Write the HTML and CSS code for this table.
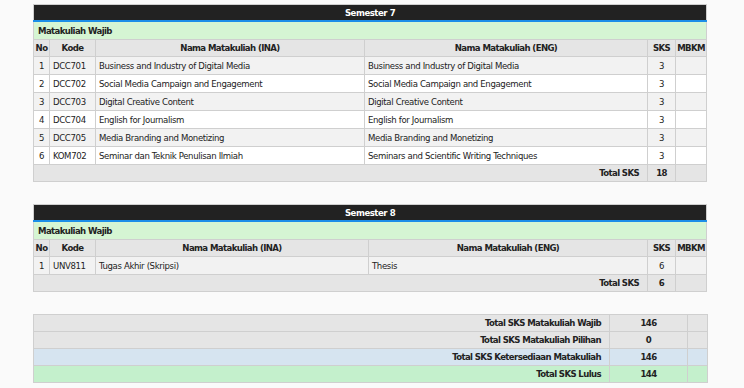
FILE: index.html
```html
<!DOCTYPE html>
<html lang="id">
<head>
<meta charset="utf-8">
<title>Kurikulum</title>
<link rel="stylesheet" href="styles.css">
</head>
<body>
<main class="page">
  <table class="sem sem7">
    <colgroup>
      <col class="c-no"><col class="c-kode"><col class="c-ina"><col class="c-eng"><col class="c-sks"><col class="c-mbkm">
    </colgroup>
    <tr class="sem-title"><th colspan="6">Semester 7</th></tr>
    <tr class="group"><td colspan="6">Matakuliah Wajib</td></tr>
    <tr class="head"><th>No</th><th>Kode</th><th>Nama Matakuliah (INA)</th><th>Nama Matakuliah (ENG)</th><th>SKS</th><th>MBKM</th></tr>
    <tr class="odd"><td class="num">1</td><td>DCC701</td><td>Business and Industry of Digital Media</td><td>Business and Industry of Digital Media</td><td class="num">3</td><td></td></tr>
    <tr class="even"><td class="num">2</td><td>DCC702</td><td>Social Media Campaign and Engagement</td><td>Social Media Campaign and Engagement</td><td class="num">3</td><td></td></tr>
    <tr class="odd"><td class="num">3</td><td>DCC703</td><td>Digital Creative Content</td><td>Digital Creative Content</td><td class="num">3</td><td></td></tr>
    <tr class="even"><td class="num">4</td><td>DCC704</td><td>English for Journalism</td><td>English for Journalism</td><td class="num">3</td><td></td></tr>
    <tr class="odd"><td class="num">5</td><td>DCC705</td><td>Media Branding and Monetizing</td><td>Media Branding and Monetizing</td><td class="num">3</td><td></td></tr>
    <tr class="even"><td class="num">6</td><td>KOM702</td><td>Seminar dan Teknik Penulisan Ilmiah</td><td>Seminars and Scientific Writing Techniques</td><td class="num">3</td><td></td></tr>
    <tr class="total"><td colspan="4" class="label">Total SKS</td><td class="num">18</td><td></td></tr>
  </table>

  <table class="sem sem8">
    <colgroup>
      <col class="c-no"><col class="c-kode"><col class="c-ina"><col class="c-eng"><col class="c-sks"><col class="c-mbkm">
    </colgroup>
    <tr class="sem-title"><th colspan="6">Semester 8</th></tr>
    <tr class="group"><td colspan="6">Matakuliah Wajib</td></tr>
    <tr class="head"><th>No</th><th>Kode</th><th>Nama Matakuliah (INA)</th><th>Nama Matakuliah (ENG)</th><th>SKS</th><th>MBKM</th></tr>
    <tr class="odd"><td class="num">1</td><td>UNV811</td><td>Tugas Akhir (Skripsi)</td><td>Thesis</td><td class="num">6</td><td></td></tr>
    <tr class="total"><td colspan="4" class="label">Total SKS</td><td class="num">6</td><td></td></tr>
  </table>

  <table class="summary">
    <colgroup><col class="s-label"><col class="s-val"><col class="s-end"></colgroup>
    <tr class="s-grey"><td class="label">Total SKS Matakuliah Wajib</td><td class="num">146</td><td></td></tr>
    <tr class="s-grey"><td class="label">Total SKS Matakuliah Pilihan</td><td class="num">0</td><td></td></tr>
    <tr class="s-blue"><td class="label">Total SKS Ketersediaan Matakuliah</td><td class="num">146</td><td></td></tr>
    <tr class="s-green"><td class="label">Total SKS Lulus</td><td class="num">144</td><td></td></tr>
  </table>
</main>
</body>
</html>
```

FILE: styles.css
```css
html, body {
  margin: 0;
  padding: 0;
  background: #fafafa;
}

body {
  font-family: "DejaVu Sans Condensed", "DejaVu Sans", sans-serif;
  font-size: 9.5px;
  letter-spacing: -0.35px;
  color: #222;
}

.page {
  display: flex;
  flex-direction: column;
  gap: 22px;
  padding: 4px 0 0 33px;
}

table {
  border-collapse: collapse;
  table-layout: fixed;
  width: 674px;
}

td, th {
  border: 1px solid #cfcfcf;
  padding: 2px 3px;
  line-height: 13px;
  text-align: left;
  white-space: nowrap;
  overflow: hidden;
}

th,
.group td,
.total td,
.summary td {
  font-weight: bold;
  font-size: 9.5px;
  letter-spacing: -0.6px;
}

.sem-title th {
  background: #222222;
  color: #ffffff;
  text-align: center;
  padding: 0 4px;
  line-height: 15px;
  letter-spacing: -0.45px;
  border-bottom: 2px solid #1c8ee8;
}

.group td {
  background: #d5f5d3;
  padding-left: 4px;
}

.head th {
  background: #e5e5e5;
  text-align: center;
  padding: 2px 1px;
  line-height: 12px;
}

.odd td { background: #f2f2f2; }
.even td { background: #ffffff; }

.num { text-align: center; }

.total td {
  background: #e5e5e5;
  line-height: 12px;
}

.total .label,
.summary .label {
  text-align: right;
  padding-right: 8px;
}

.sem .c-no { width: 16px; }
.sem .c-kode { width: 46px; }
.sem .c-sks { width: 28px; }
.sem .c-mbkm { width: 31px; }
.sem7 .c-ina { width: 269px; }
.sem7 .c-eng { width: 283px; }
.sem8 .c-ina { width: 273px; }
.sem8 .c-eng { width: 279px; }

.summary td {
  padding: 2px 4px;
  line-height: 12px;
}
.summary .s-label { width: 576px; }
.summary .s-val { width: 78px; }
.summary .s-end { width: 20px; }

.s-grey td { background: #e5e5e5; }
.s-blue td { background: #d6e4f0; }
.s-green td { background: #c4f0cc; }
```
